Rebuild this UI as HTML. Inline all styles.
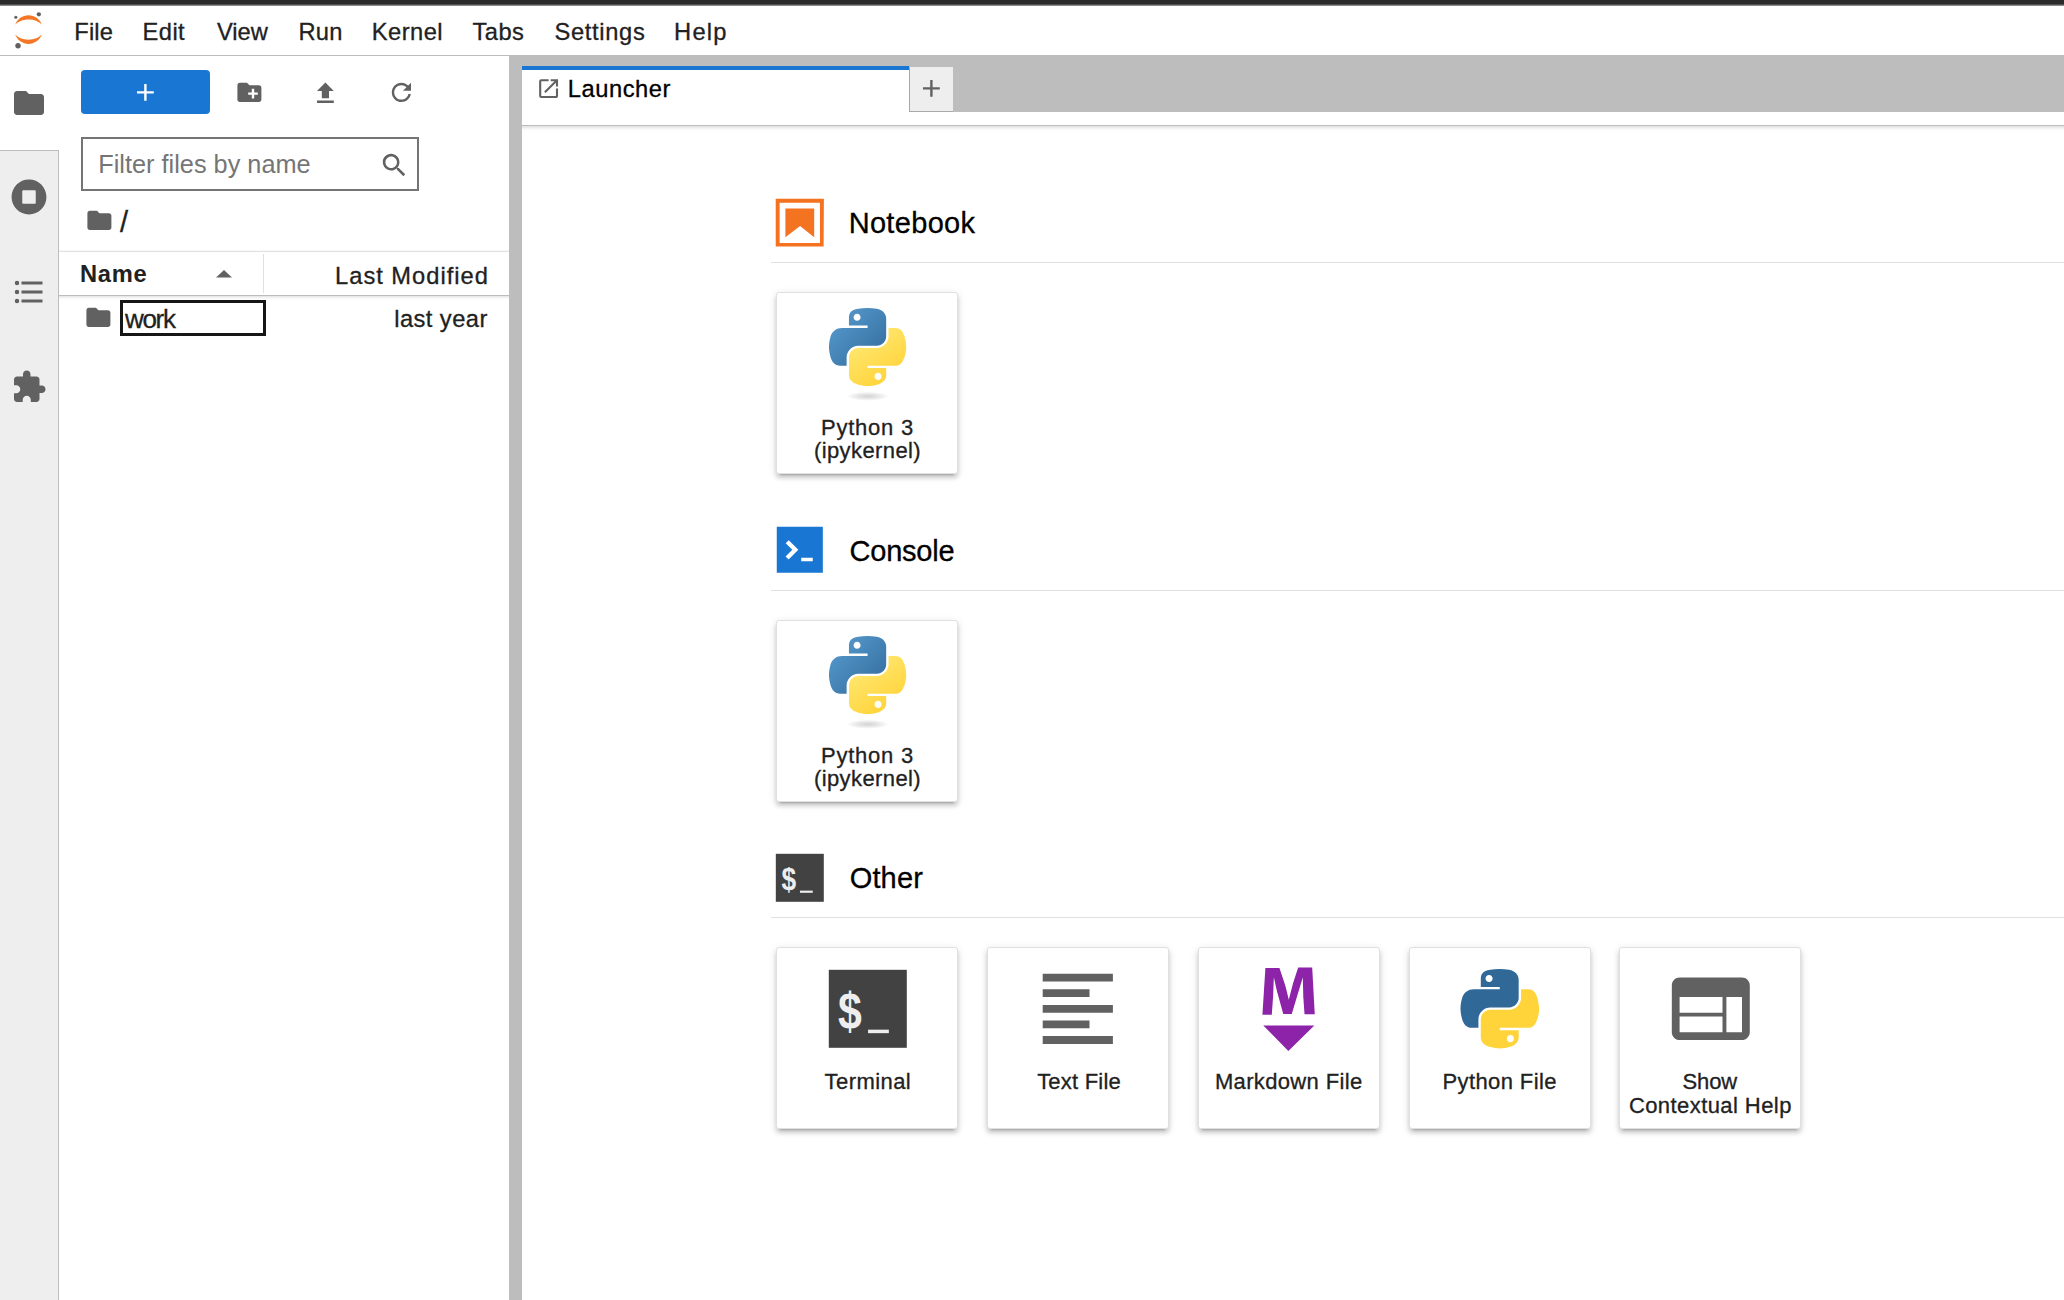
<!DOCTYPE html>
<html lang="en"><head><meta charset="utf-8"><title>JupyterLab</title>
<style>
html,body{margin:0;padding:0;background:#fff;}
body{width:2064px;height:1300px;position:relative;overflow:hidden;font-family:"Liberation Sans",Arial,sans-serif;}
.t{position:absolute;white-space:nowrap;line-height:1;-webkit-text-stroke:0.3px currentColor;}
.i{position:absolute;display:block;overflow:visible;}
.b{position:absolute;box-sizing:border-box;}
.card{position:absolute;box-sizing:border-box;width:182px;height:182px;background:#fff;border:1px solid #e0e0e0;border-radius:3px;
 box-shadow:0 5px 2px -4px rgba(0,0,0,.2),0 4px 4px 0 rgba(0,0,0,.14),0 2px 9px 0 rgba(0,0,0,.12);}
</style></head><body>
<svg width="0" height="0" style="position:absolute"><defs>
<linearGradient id="pb" x1="0" y1="0" x2="1" y2="1"><stop offset="0" stop-color="#5a9fd4"/><stop offset="1" stop-color="#306998"/></linearGradient>
<linearGradient id="py" x1="0.75" y1="0.85" x2="0.25" y2="0.1"><stop offset="0" stop-color="#ffd43b"/><stop offset="1" stop-color="#ffe873"/></linearGradient>
<radialGradient id="ps"><stop offset="0" stop-color="#9a9a9a" stop-opacity=".42"/><stop offset="1" stop-color="#7f7f7f" stop-opacity="0"/></radialGradient>
</defs></svg>

<div class="b" style="left:0;top:0;width:2064px;height:4px;background:#2b2b2b"></div>
<div class="b" style="left:0;top:4px;width:2064px;height:1px;background:#505050"></div>
<div class="b" style="left:0;top:5px;width:2064px;height:1px;background:#8a8a8a"></div>
<div class="b" style="left:0;top:55px;width:2064px;height:1px;background:#bdbdbd"></div>
<div class="b" style="left:509px;top:56px;width:1555px;height:1244px;background:#bdbdbd"></div>
<div class="b" style="left:522px;top:112px;width:1542px;height:1188px;background:#fff"></div>
<div class="b" style="left:522px;top:112px;width:1542px;height:30px;overflow:hidden"><div class="b" style="left:-10px;top:0;width:1570px;height:14px;background:#fff;border-bottom:1px solid #bdbdbd;box-shadow:0 1px 4px rgba(0,0,0,.18)"></div></div>
<div class="b" style="left:522px;top:66px;width:387px;height:47px;background:#fff;border-top:4px solid #1976d2"></div>
<div class="b" style="left:909px;top:67px;width:44px;height:45px;background:#eee;border-left:1px solid #a8a8a8;border-bottom:1px solid #a8a8a8"></div>
<svg class="i" style="left:917.00px;top:74.00px" width="28.80" height="28.80" viewBox="0 0 24 24" ><path fill="#616161" d="M19 13h-6v6h-2v-6H5v-2h6V5h2v6h6v2z"/></svg>
<svg class="i" style="left:535.85px;top:76.25px" width="25.20" height="25.20" viewBox="0 0 24 24" ><path fill="#616161" d="M19 19H5V5h7V3H5a2 2 0 00-2 2v14a2 2 0 002 2h14c1.1 0 2-.9 2-2v-7h-2v7zM14 3v2h3.59l-9.83 9.83 1.41 1.41L19 6.41V10h2V3h-7z"/></svg>
<span class="t" style="left:567.85px;top:77.84px;font-size:23.70px;letter-spacing:0.525px;color:#000;">Launcher</span>
<div class="b" style="left:0;top:150px;width:59px;height:1150px;background:#eee;border-right:1px solid #bdbdbd;border-top:1px solid #bdbdbd"></div>
<svg class="i" style="left:11.20px;top:84.80px" width="36.00" height="36.00" viewBox="0 0 24 24" ><path fill="#616161" d="M10 4H4c-1.1 0-1.99.9-1.99 2L2 18c0 1.1.9 2 2 2h16c1.1 0 2-.9 2-2V8c0-1.1-.9-2-2-2h-8l-2-2z"/></svg>
<svg class="i" style="left:11.10px;top:179.40px" width="36.00" height="36.00" viewBox="0 0 512 512" ><path fill="#616161" d="M256 8C119 8 8 119 8 256s111 248 248 248 248-111 248-248S393 8 256 8zm96 328c0 8.8-7.2 16-16 16H176c-8.8 0-16-7.2-16-16V176c0-8.800 7.2-16 16-16h160c8.800 0 16 7.2 16 16v160z"/></svg>
<svg class="i" style="left:10.75px;top:274.25px" width="36.00" height="36.00" viewBox="0 0 24 24" ><path fill="#616161" d="M7,5H21V7H7V5M7,13V11H21V13H7M4,4.5A1.5,1.5 0 0,1 5.5,6A1.5,1.5 0 0,1 4,7.5A1.5,1.5 0 0,1 2.5,6A1.5,1.5 0 0,1 4,4.5M4,10.5A1.5,1.5 0 0,1 5.5,12A1.5,1.5 0 0,1 4,13.5A1.5,1.5 0 0,1 2.5,12A1.5,1.5 0 0,1 4,10.5M7,19V17H21V19H7M4,16.5A1.5,1.5 0 0,1 5.5,18A1.5,1.5 0 0,1 4,19.5A1.5,1.5 0 0,1 2.5,18A1.5,1.5 0 0,1 4,16.5Z"/></svg>
<svg class="i" style="left:10.80px;top:369.30px" width="36.00" height="36.00" viewBox="0 0 24 24" ><path fill="#616161" d="M20.5 11H19V7c0-1.1-.9-2-2-2h-4V3.5C13 2.12 11.88 1 10.5 1S8 2.12 8 3.5V5H4c-1.1 0-1.99.9-1.99 2v3.8H3.500c1.49 0 2.7 1.21 2.7 2.7s-1.21 2.7-2.7 2.7H2V20c0 1.1.9 2 2 2h3.8v-1.5c0-1.49 1.21-2.7 2.7-2.7 1.49 0 2.7 1.21 2.7 2.7V22H17c1.1 0 2-.9 2-2v-4h1.5c1.38 0 2.5-1.120 2.5-2.5S21.880 11 20.5 11z"/></svg>
<svg class="i" style="left:13.6px;top:12px" width="28.3" height="37" viewBox="0 0 39 51"><g transform="translate(-1638 -2281)"><g fill="#F37726"><path transform="translate(1639.74 2311.98)" d="M 18.2646 7.13411C 10.4145 7.13411 3.55872 4.2576 0 0C 1.32539 3.8204 3.79556 7.13081 7.0686 9.47303C 10.3417 11.8152 14.2557 13.0734 18.269 13.0734C 22.2823 13.0734 26.1963 11.8152 29.4694 9.47303C 32.7424 7.13081 35.2126 3.8204 36.538 0C 32.9705 4.2576 26.1148 7.13411 18.2646 7.13411Z"/><path transform="translate(1639.73 2285.48)" d="M 18.2733 5.93931C 26.1235 5.93931 32.9793 8.81583 36.538 13.0734C 35.2126 9.25303 32.7424 5.94262 29.4694 3.6004C 26.1963 1.25818 22.2823 0 18.269 0C 14.2557 0 10.3417 1.25818 7.0686 3.6004C 3.79556 5.94262 1.32539 9.25303 0 13.0734C 3.56745 8.82463 10.4232 5.93931 18.2733 5.93931Z"/></g><g fill="#616161"><circle cx="1672.25" cy="2284.27" r="2.95"/><circle cx="1643.52" cy="2327.54" r="3.72"/><circle cx="1640.54" cy="2288.26" r="2.18"/></g></g></svg>
<span class="t" style="left:74.35px;top:20.94px;font-size:23.70px;letter-spacing:0.112px;color:#212121;">File</span>
<span class="t" style="left:142.60px;top:20.94px;font-size:23.70px;letter-spacing:0.417px;color:#212121;">Edit</span>
<span class="t" style="left:216.88px;top:20.94px;font-size:23.70px;letter-spacing:0.054px;color:#212121;">View</span>
<span class="t" style="left:298.60px;top:20.94px;font-size:23.70px;letter-spacing:0.164px;color:#212121;">Run</span>
<span class="t" style="left:371.80px;top:20.94px;font-size:23.70px;letter-spacing:0.449px;color:#212121;">Kernel</span>
<span class="t" style="left:472.53px;top:20.94px;font-size:23.70px;letter-spacing:0.432px;color:#212121;">Tabs</span>
<span class="t" style="left:554.43px;top:20.94px;font-size:23.70px;letter-spacing:0.674px;color:#212121;">Settings</span>
<span class="t" style="left:674.10px;top:20.94px;font-size:23.70px;letter-spacing:1.213px;color:#212121;">Help</span>
<div class="b" style="left:81px;top:70px;width:129px;height:44px;background:#1976d2;border-radius:4px"></div>
<svg class="i" style="left:130.95px;top:78.00px" width="28.80" height="28.80" viewBox="0 0 24 24" ><path fill="#fff" d="M19 13h-6v6h-2v-6H5v-2h6V5h2v6h6v2z"/></svg>
<svg class="i" style="left:234.85px;top:77.70px" width="28.80" height="28.80" viewBox="0 0 24 24" ><path fill="#616161" d="M20 6h-8l-2-2H4c-1.11 0-1.99.89-1.99 2L2 18c0 1.11.89 2 2 2h16c1.11 0 2-.89 2-2V8c0-1.11-.89-2-2-2zm-1 8h-3v3h-2v-3h-3v-2h3V9h2v3h3v2z"/></svg>
<svg class="i" style="left:311.00px;top:78.50px" width="28.80" height="28.80" viewBox="0 0 24 24" ><path fill="#616161" d="M9 16h6v-6h4l-7-7-7 7h4zm-4 2h14v2H5z"/></svg>
<svg class="i" style="left:387.10px;top:78.20px" width="28.80" height="28.80" viewBox="0 0 18 18" ><path fill="#616161" d="M9 13.5c-2.49 0-4.5-2.01-4.5-4.5S6.51 4.5 9 4.5c1.24 0 2.36.52 3.17 1.33L10 8h5V3l-1.76 1.76C12.15 3.68 10.66 3 9 3 5.69 3 3.01 5.69 3.01 9S5.69 15 9 15c2.97 0 5.43-2.16 5.9-5h-1.52c-.46 2-2.24 3.5-4.38 3.5z"/></svg>
<div class="b" style="left:81px;top:137px;width:338px;height:54px;border:2px solid #757575;background:#fff"></div>
<span class="t" style="left:98.28px;top:152.48px;font-size:25.30px;letter-spacing:0.004px;color:#757575;-webkit-text-stroke:0;">Filter files by name</span>
<svg class="i" style="left:379.60px;top:150.90px" width="28.00" height="28.00" viewBox="0 0 18 18" ><path fill="#616161" d="M12.1 10.9h-.7l-.2-.2c.8-.9 1.3-2.2 1.3-3.5 0-3-2.4-5.4-5.4-5.4S1.8 4.2 1.8 7.1s2.4 5.4 5.4 5.4c1.3 0 2.5-.5 3.5-1.3l.2.2v.7l4.1 4.1 1.2-1.2-4.1-4.100zm-4.9 0c-2.1 0-3.7-1.7-3.7-3.7s1.7-3.700 3.7-3.700 3.700 1.700 3.700 3.700-1.600 3.700-3.700 3.700z"/></svg>
<svg class="i" style="left:84.50px;top:205.80px" width="28.80" height="28.80" viewBox="0 0 24 24" ><path fill="#616161" d="M10 4H4c-1.1 0-1.99.9-1.99 2L2 18c0 1.1.9 2 2 2h16c1.1 0 2-.9 2-2V8c0-1.1-.9-2-2-2h-8l-2-2z"/></svg>
<span class="t" style="left:120.00px;top:207.75px;font-size:29.00px;letter-spacing:0.000px;color:#212121;">/</span>
<div class="b" style="left:59px;top:245px;width:450px;height:70px;overflow:hidden"><div class="b" style="left:-10px;top:6px;width:470px;height:45px;background:#fff;border-top:1px solid #e0e0e0;border-bottom:1px solid #bdbdbd;box-shadow:0 1px 3px rgba(0,0,0,.15)"></div></div>
<div class="b" style="left:263px;top:254px;width:1px;height:39px;background:#e0e0e0"></div>
<span class="t" style="left:79.96px;top:262.84px;font-size:23.70px;letter-spacing:0.723px;color:#212121;font-weight:700;-webkit-text-stroke:0;">Name</span>
<svg class="i" style="left:216px;top:269.75px" width="16" height="7.5" viewBox="0 0 16 7.5"><path fill="#616161" d="M0 7.500L8 0l8 7.500z"/></svg>
<span class="t" style="left:335.10px;top:264.69px;font-size:23.70px;letter-spacing:0.985px;color:#212121;">Last Modified</span>
<svg class="i" style="left:83.60px;top:302.90px" width="28.80" height="28.80" viewBox="0 0 24 24" ><path fill="#616161" d="M10 4H4c-1.1 0-1.99.9-1.99 2L2 18c0 1.1.9 2 2 2h16c1.1 0 2-.9 2-2V8c0-1.1-.9-2-2-2h-8l-2-2z"/></svg>
<div class="b" style="left:120px;top:300px;width:146px;height:36px;border:3px solid #161616;background:#fff"></div>
<span class="t" style="left:124.88px;top:305.89px;font-size:26.00px;letter-spacing:-1.247px;color:#212121;">work</span>
<span class="t" style="left:394.21px;top:307.84px;font-size:23.70px;letter-spacing:0.445px;color:#212121;">last year</span>
<svg class="i" style="left:770.90px;top:194.30px" width="57.60" height="57.60" viewBox="0 0 22 22" ><g fill="#F37321"><path d="M18.7 3.3v15.4H3.3V3.3h15.4m1.5-1.500H1.800v18.300h18.300l.100-18.300z"/><path d="M16.5 16.5l-5.400-4.300-5.600 4.300v-11h11z"/></g></svg>
<span class="t" style="left:848.68px;top:209.05px;font-size:29.00px;letter-spacing:0.314px;color:#000;">Notebook</span>
<div class="b" style="left:771px;top:262.0px;width:1293px;height:1px;background:#e0e0e0"></div>
<svg class="i" style="left:771.00px;top:521.30px" width="57.60" height="57.60" viewBox="0 0 200 200" ><path fill="#1976D2" d="M20 19.800h160v159.900H20z"/><path fill="#fff" d="M105 127.300h40v12.800h-40zM51.100 77L74 99.900l-23.300 23.300 10.500 10.500 23.300-23.300L95 99.900 84.500 89.400 61.600 66.500z"/></svg>
<span class="t" style="left:849.55px;top:536.55px;font-size:29.00px;letter-spacing:-0.220px;color:#000;">Console</span>
<div class="b" style="left:771px;top:589.5px;width:1293px;height:1px;background:#e0e0e0"></div>
<svg class="i" style="left:771.00px;top:849.10px" width="57.60" height="57.60" viewBox="0 0 24 24" ><rect x="2" y="2" width="20" height="20" fill="#424242"/><text transform="translate(4.35 17.25) scale(0.93 1.13)" font-family="Liberation Sans, sans-serif" font-weight="700" font-size="11.8" fill="#eee">$</text><rect x="12.07" y="17.35" width="5.33" height="0.9" fill="#eee"/></svg>
<span class="t" style="left:849.70px;top:864.05px;font-size:29.00px;letter-spacing:0.149px;color:#000;">Other</span>
<div class="b" style="left:771px;top:917.0px;width:1293px;height:1px;background:#e0e0e0"></div>
<div class="card" style="left:776.0px;top:292.0px"></div>
<svg class="i" style="left:828.57px;top:308.20px" width="77.84" height="93.13" viewBox="0 0 112 134"><path fill="url(#pb)" d="M 54.918785,9.1927421e-4 C 50.335132,0.02221727 45.957846,0.41313697 42.106285,1.0946693 30.760069,3.0991731 28.700036,7.2947714 28.700035,15.032169 v 10.21875 h 26.8125 v 3.40625 h -26.8125 -10.0625 c -7.792459,0 -14.6157588,4.683717 -16.7499998,13.59375 -2.46181998,10.212966 -2.57101508,16.586023 0,27.25 1.9059283,7.937852 6.4575432,13.593748 14.2499998,13.59375 h 9.21875 v -12.25 c 0,-8.849902 7.657144,-16.656248 16.75,-16.65625 h 26.78125 c 7.454951,0 13.406253,-6.138164 13.40625,-13.625 v -25.53125 c 0,-7.2663386 -6.12998,-12.7247771 -13.40625,-13.9374997 C 64.281548,0.32794397 59.502438,-0.02037903 54.918785,9.1927421e-4 Z m -14.5,8.21875012579 c 2.769547,0 5.03125,2.2986456 5.03125,5.1249996 -2e-6,2.816336 -2.261703,5.09375 -5.03125,5.09375 -2.779476,-1e-6 -5.03125,-2.277415 -5.03125,-5.09375 -10e-7,-2.826353 2.251774,-5.1249996 5.03125,-5.1249996 z"/><path fill="url(#py)" d="m 85.637535,28.657169 v 11.90625 c 0,9.230755 -7.825895,16.999999 -16.75,17 h -26.78125 c -7.335833,0 -13.406249,6.278483 -13.40625,13.625 v 25.531247 c 0,7.266344 6.318588,11.540324 13.40625,13.625004 8.487331,2.49561 16.626237,2.94663 26.78125,0 6.750155,-1.95439 13.406253,-5.88761 13.40625,-13.625004 V 86.500919 h -26.78125 v -3.40625 h 26.78125 13.406254 c 7.792461,0 10.696251,-5.435408 13.406241,-13.59375 2.79933,-8.398886 2.68022,-16.475776 0,-27.25 -1.92578,-7.757441 -5.60387,-13.59375 -13.406241,-13.59375 z m -15.0625,64.65625 c 2.779478,3e-6 5.03125,2.277417 5.03125,5.093747 -2e-6,2.826354 -2.251775,5.125004 -5.03125,5.125004 -2.76955,0 -5.03125,-2.29865 -5.03125,-5.125004 2e-6,-2.81633 2.261697,-5.093747 5.03125,-5.093747 z"/><ellipse cx="55.800" cy="127" rx="30" ry="6.500" fill="url(#ps)"/></svg>
<span class="t" style="left:821.04px;top:417.08px;font-size:22.00px;letter-spacing:0.750px;color:#212121;">Python 3</span>
<span class="t" style="left:813.98px;top:440.18px;font-size:22.00px;letter-spacing:0.400px;color:#212121;">(ipykernel)</span>
<div class="card" style="left:776.0px;top:620.0px"></div>
<svg class="i" style="left:828.57px;top:636.20px" width="77.84" height="93.13" viewBox="0 0 112 134"><path fill="url(#pb)" d="M 54.918785,9.1927421e-4 C 50.335132,0.02221727 45.957846,0.41313697 42.106285,1.0946693 30.760069,3.0991731 28.700036,7.2947714 28.700035,15.032169 v 10.21875 h 26.8125 v 3.40625 h -26.8125 -10.0625 c -7.792459,0 -14.6157588,4.683717 -16.7499998,13.59375 -2.46181998,10.212966 -2.57101508,16.586023 0,27.25 1.9059283,7.937852 6.4575432,13.593748 14.2499998,13.59375 h 9.21875 v -12.25 c 0,-8.849902 7.657144,-16.656248 16.75,-16.65625 h 26.78125 c 7.454951,0 13.406253,-6.138164 13.40625,-13.625 v -25.53125 c 0,-7.2663386 -6.12998,-12.7247771 -13.40625,-13.9374997 C 64.281548,0.32794397 59.502438,-0.02037903 54.918785,9.1927421e-4 Z m -14.5,8.21875012579 c 2.769547,0 5.03125,2.2986456 5.03125,5.1249996 -2e-6,2.816336 -2.261703,5.09375 -5.03125,5.09375 -2.779476,-1e-6 -5.03125,-2.277415 -5.03125,-5.09375 -10e-7,-2.826353 2.251774,-5.1249996 5.03125,-5.1249996 z"/><path fill="url(#py)" d="m 85.637535,28.657169 v 11.90625 c 0,9.230755 -7.825895,16.999999 -16.75,17 h -26.78125 c -7.335833,0 -13.406249,6.278483 -13.40625,13.625 v 25.531247 c 0,7.266344 6.318588,11.540324 13.40625,13.625004 8.487331,2.49561 16.626237,2.94663 26.78125,0 6.750155,-1.95439 13.406253,-5.88761 13.40625,-13.625004 V 86.500919 h -26.78125 v -3.40625 h 26.78125 13.406254 c 7.792461,0 10.696251,-5.435408 13.406241,-13.59375 2.79933,-8.398886 2.68022,-16.475776 0,-27.25 -1.92578,-7.757441 -5.60387,-13.59375 -13.406241,-13.59375 z m -15.0625,64.65625 c 2.779478,3e-6 5.03125,2.277417 5.03125,5.093747 -2e-6,2.826354 -2.251775,5.125004 -5.03125,5.125004 -2.76955,0 -5.03125,-2.29865 -5.03125,-5.125004 2e-6,-2.81633 2.261697,-5.093747 5.03125,-5.093747 z"/><ellipse cx="55.800" cy="127" rx="30" ry="6.500" fill="url(#ps)"/></svg>
<span class="t" style="left:821.04px;top:744.58px;font-size:22.00px;letter-spacing:0.750px;color:#212121;">Python 3</span>
<span class="t" style="left:813.98px;top:767.68px;font-size:22.00px;letter-spacing:0.400px;color:#212121;">(ipykernel)</span>
<div class="card" style="left:776.0px;top:947.0px"></div>
<svg class="i" style="left:820.80px;top:961.70px" width="93.60" height="93.60" viewBox="0 0 24 24" ><rect x="2" y="2" width="20" height="20" fill="#424242"/><text transform="translate(4.35 17.25) scale(0.93 1.13)" font-family="Liberation Sans, sans-serif" font-weight="700" font-size="11.8" fill="#eee">$</text><rect x="12.07" y="17.35" width="5.33" height="0.9" fill="#eee"/></svg>
<span class="t" style="left:824.56px;top:1071.13px;font-size:22.00px;letter-spacing:0.439px;color:#212121;">Terminal</span>
<div class="card" style="left:987.0px;top:947.0px"></div>
<svg class="i" style="left:1031.10px;top:961.70px" width="93.60" height="93.60" viewBox="0 0 24 24" ><path fill="#616161" d="M15 15H3v2h12v-2zm0-8H3v2h12V7zM3 13h18v-2H3v2zm0 8h18v-2H3v2zM3 3v2h18V3H3z"/></svg>
<span class="t" style="left:1037.16px;top:1071.38px;font-size:22.00px;letter-spacing:0.210px;color:#212121;">Text File</span>
<div class="card" style="left:1198.0px;top:947.0px"></div>
<svg class="i" style="left:1242.10px;top:961.70px" width="93.60" height="93.60" viewBox="0 0 22 22" ><path fill="#8C23A8" d="M5 14.9h12l-6.100 6zm9.400-6.800c0-1.300-.100-2.900-.100-4.500-.400 1.400-.900 2.900-1.300 4.300l-1.300 4.300h-2L8.500 7.900c-.400-1.300-.700-2.900-1-4.300-.100 1.600-.100 3.200-.200 4.600L7 12.400H4.800l.700-11h3.300L10 5c.400 1.200.700 2.700 1 3.900.300-1.200.700-2.700 1-3.900l1.200-3.700h3.300l.600 11h-2.400l-.300-4.200z"/></svg>
<span class="t" style="left:1214.94px;top:1071.38px;font-size:22.00px;letter-spacing:0.345px;color:#212121;">Markdown File</span>
<div class="card" style="left:1409.0px;top:947.0px"></div>
<svg class="i" style="left:1453.10px;top:961.70px" width="93.60" height="93.60" viewBox="-10 -10 131.161 132.389" ><path fill="#306998" d="M 54.918785,9.1927421e-4 C 50.335132,0.02221727 45.957846,0.41313697 42.106285,1.0946693 30.760069,3.0991731 28.700036,7.2947714 28.700035,15.032169 v 10.21875 h 26.8125 v 3.40625 h -26.8125 -10.0625 c -7.792459,0 -14.6157588,4.683717 -16.7499998,13.59375 -2.46181998,10.212966 -2.57101508,16.586023 0,27.25 1.9059283,7.937852 6.4575432,13.593748 14.2499998,13.59375 h 9.21875 v -12.25 c 0,-8.849902 7.657144,-16.656248 16.75,-16.65625 h 26.78125 c 7.454951,0 13.406253,-6.138164 13.40625,-13.625 v -25.53125 c 0,-7.2663386 -6.12998,-12.7247771 -13.40625,-13.9374997 C 64.281548,0.32794397 59.502438,-0.02037903 54.918785,9.1927421e-4 Z m -14.5,8.21875012579 c 2.769547,0 5.03125,2.2986456 5.03125,5.1249996 -2e-6,2.816336 -2.261703,5.09375 -5.03125,5.09375 -2.779476,-1e-6 -5.03125,-2.277415 -5.03125,-5.09375 -10e-7,-2.826353 2.251774,-5.1249996 5.03125,-5.1249996 z"/><path fill="#ffd43b" d="m 85.637535,28.657169 v 11.90625 c 0,9.230755 -7.825895,16.999999 -16.75,17 h -26.78125 c -7.335833,0 -13.406249,6.278483 -13.40625,13.625 v 25.531247 c 0,7.266344 6.318588,11.540324 13.40625,13.625004 8.487331,2.49561 16.626237,2.94663 26.78125,0 6.750155,-1.95439 13.406253,-5.88761 13.40625,-13.625004 V 86.500919 h -26.78125 v -3.40625 h 26.78125 13.406254 c 7.792461,0 10.696251,-5.435408 13.406241,-13.59375 2.79933,-8.398886 2.68022,-16.475776 0,-27.25 -1.92578,-7.757441 -5.60387,-13.59375 -13.406241,-13.59375 z m -15.0625,64.65625 c 2.779478,3e-6 5.03125,2.277417 5.03125,5.093747 -2e-6,2.826354 -2.251775,5.125004 -5.03125,5.125004 -2.76955,0 -5.03125,-2.29865 -5.03125,-5.125004 2e-6,-2.81633 2.261697,-5.093747 5.03125,-5.093747 z"/></svg>
<span class="t" style="left:1442.44px;top:1071.08px;font-size:22.00px;letter-spacing:0.404px;color:#212121;">Python File</span>
<div class="card" style="left:1619.0px;top:947.0px"></div>
<svg class="i" style="left:1664.20px;top:961.70px" width="93.60" height="93.60" viewBox="0 0 24 24" ><path fill="#616161" d="M20 4H4c-1.1 0-1.99.9-1.99 2L2 18c0 1.1.9 2 2 2h16c1.1 0 2-.9 2-2V6c0-1.100-.9-2-2-2zm-5 14H4v-4h11v4zm0-5H4V9h11v4zm5 5h-4V9h4v9z"/></svg>
<span class="t" style="left:1682.51px;top:1071.08px;font-size:22.00px;letter-spacing:-0.107px;color:#212121;">Show</span>
<span class="t" style="left:1628.90px;top:1095.18px;font-size:22.00px;letter-spacing:0.425px;color:#212121;">Contextual Help</span>
</body></html>
